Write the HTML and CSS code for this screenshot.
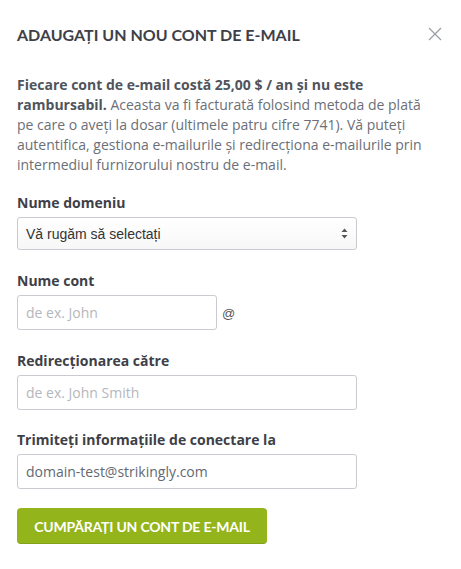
FILE: index.html
```html
<!DOCTYPE html>
<html>
<head>
<meta charset="utf-8">
<link rel="stylesheet" href="styles.css">
</head>
<body>
<div class="modal">
  <div class="header">
    <h1 class="title">ADAUGAȚI UN NOU CONT DE E-MAIL</h1>
    <svg class="close" width="14" height="14" viewBox="0 0 14 14"><path d="M1 1L13 13M13 1L1 13" stroke="#9a9ca3" stroke-width="1.2" fill="none"/></svg>
  </div>
  <p class="desc"><b>Fiecare cont de e-mail costă 25,00 $ / an și nu este rambursabil.</b> Aceasta va fi facturată folosind metoda de plată pe care o aveți la dosar (ultimele patru cifre 7741). Vă puteți autentifica, gestiona e-mailurile și redirecționa e-mailurile prin intermediul furnizorului nostru de e-mail.</p>
  <div class="field first">
    <label class="label">Nume domeniu</label>
    <div class="select">
      <span>Vă rugăm să selectați</span>
      <svg width="7" height="11" viewBox="0 0 7 11"><path d="M3.5 0.5L6.5 4H0.5Z M0.5 7H6.5L3.5 10.5Z" fill="#555"/></svg>
    </div>
  </div>
  <div class="field f2">
    <label class="label">Nume cont</label>
    <div class="row">
      <div class="input short placeholder">de ex. John</div>
      <span class="at">@</span>
    </div>
  </div>
  <div class="field f3">
    <label class="label">Redirecționarea către</label>
    <div class="input placeholder">de ex. John Smith</div>
  </div>
  <div class="field f4">
    <label class="label">Trimiteți informațiile de conectare la</label>
    <div class="input value">domain-test@strikingly.com</div>
  </div>
  <button class="btn">CUMPĂRAȚI UN CONT DE E-MAIL</button>
</div>
</body>
</html>
```
FILE: styles.css
```css
html, body { margin: 0; padding: 0; background: #fff; }
body { font-family: "Open Sans", sans-serif; color: #636972; }
.modal { padding: 24px 17px 0 17px; width: 427px; }
.header { display: flex; justify-content: space-between; align-items: center; height: 20px; }
.title { margin: 0; font-family: "Lato", sans-serif; font-weight: 700; font-size: 16px; letter-spacing: 0px; color: #3e4048; }
.close { margin-right: 2px; margin-top: 0px; }
.desc { margin: 31px 0 0 0; font-size: 14px; line-height: 20px; color: #6b6f78; width: 422px; }
.desc b { color: #50545c; font-weight: 700; }
.field.first { margin-top: 18px; }
.field.f2 { margin-top: 21px; }
.field.f3 { margin-top: 21px; }
.field.f4 { margin-top: 20px; }
.label { display: block; font-weight: 700; font-size: 14px; line-height: 20px; color: #3e4048; margin-bottom: 4px; }
.select { box-sizing: border-box; width: 340px; height: 33px; border: 1px solid #c9cbd0; border-radius: 3px; background: linear-gradient(#fff, #f7f7f7); display: flex; align-items: center; justify-content: space-between; padding: 0 8px 0 8px; font-family: "Liberation Sans", Arial, sans-serif; font-size: 14px; color: #333; }
.row { display: flex; align-items: center; }
.input { box-sizing: border-box; width: 340px; height: 35px; border: 1px solid #c9cbd0; border-radius: 3px; padding: 0 8px; display: flex; align-items: center; font-size: 14px; }
.input.short { width: 200px; }
.placeholder { color: #b5b7bc; }
.value { color: #636972; }
.at { font-family: "Liberation Sans", Arial, sans-serif; font-size: 13px; color: #555; margin-left: 5px; margin-top: 2px; }
.btn { display: block; margin-top: 19px; width: 250px; height: 36px; border: none; border-radius: 4px; background: #93b41b; color: #fff; font-family: "Lato", sans-serif; font-weight: 700; font-size: 14px; letter-spacing: -0.2px; padding: 0; box-shadow: inset 0 -1px 0 rgba(0,0,0,0.1); }
```
